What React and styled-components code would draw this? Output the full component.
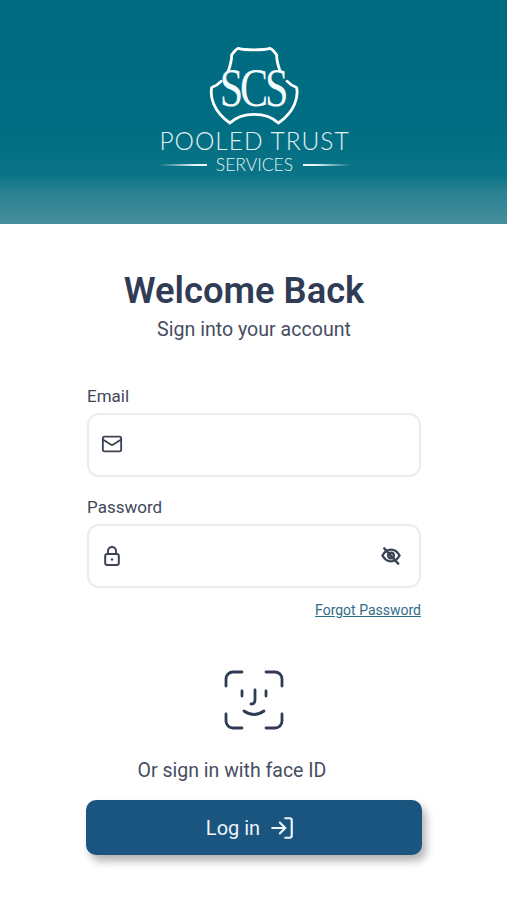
import React from 'react'
import styled, { createGlobalStyle } from 'styled-components'
import { Mail, LogIn } from 'lucide-react'

const GlobalStyle = createGlobalStyle`
  body {
    margin: 0;
    background: #fff;
    font-family: Roboto, "Liberation Sans", sans-serif;
  }
`

const Page = styled.div`
  width: 507px;
  height: 900px;
  overflow: hidden;
  background: #fff;
`

const Header = styled.header`
  height: 224px;
  padding: 43px 0 0 2px;
  box-sizing: border-box;
  display: flex;
  flex-direction: column;
  align-items: center;
  background: linear-gradient(180deg, #006b80 0%, #006d82 55%, #0a7387 78%, #2a8192 86%, #458e9d 100%);
`

const Shield = styled.div`
  position: relative;
  width: 92px;
  height: 83px;
  margin-left: -2px;
`

const Monogram = styled.span`
  position: absolute;
  left: 0;
  right: 0;
  top: 18px;
  text-align: center;
  font-family: "Liberation Serif", serif;
  font-size: 54px;
  line-height: 54px;
  letter-spacing: -4px;
  padding-right: 4px;
  color: #f4fbfb;
  transform: scaleX(0.78);
`

const Brand = styled.div`
  margin-top: 1px;
  font-family: Lato, sans-serif;
  font-weight: 300;
  font-size: 24.5px;
  line-height: 28px;
  letter-spacing: 1px;
  color: #e2f1f2;
  white-space: nowrap;
`

const SubBrandRow = styled.div`
  width: 192px;
  display: flex;
  align-items: center;
  justify-content: space-between;
`

const SubBrand = styled.span`
  font-family: Lato, sans-serif;
  font-weight: 300;
  font-size: 17.5px;
  line-height: 20px;
  color: #e2f1f2;
`

const Rule = styled.i`
  display: block;
  width: 48px;
  height: 1.5px;
  background: linear-gradient(${p => (p.$flip ? '270deg' : '90deg')}, rgba(255, 255, 255, 0) 0%, #eaf6f7 75%);
`

const Main = styled.main`
  padding: 46px 86px 0 87px;
  display: flex;
  flex-direction: column;
`

const Title = styled.h1`
  margin: 0;
  padding-right: 20px;
  text-align: center;
  font-size: 36.3px;
  line-height: 42px;
  font-weight: 600;
  color: #303c56;
`

const Subtitle = styled.p`
  margin: 5px 0 0;
  text-align: center;
  font-size: 19.6px;
  line-height: 26px;
  color: #464d60;
`

const Field = styled.div`
  margin-top: ${p => p.$top}px;
`

const Label = styled.label`
  display: block;
  font-size: 17px;
  line-height: 20px;
  margin-bottom: 7px;
  color: #41485a;
`

const InputBox = styled.div`
  height: 64px;
  box-sizing: border-box;
  border: 2px solid #ececec;
  border-radius: 12px;
  padding: 0 18px 0 12px;
  display: flex;
  align-items: center;
  justify-content: space-between;
  color: #3c4356;
`

const MailIcon = styled(Mail)`
  margin-bottom: 3px;
`

const LockSvg = styled.svg`
  margin-left: 3px;
`

const Forgot = styled.a`
  align-self: flex-end;
  margin-top: 14px;
  font-size: 14px;
  line-height: 17px;
  color: #2f6d86;
  text-decoration: underline;
`

const FaceBlock = styled.div`
  margin-top: 51px;
  align-self: center;
  line-height: 0;
  color: #303c56;
`

const FaceText = styled.p`
  margin: 29px 0 0;
  padding-right: 44px;
  text-align: center;
  font-size: 19.5px;
  line-height: 24px;
  color: #464d60;
`

const LoginButton = styled.button`
  margin: 17px -1px 0 -1px;
  padding: 0 7px 0 0;
  height: 55px;
  border: 0;
  border-radius: 10px;
  background: #1a5580;
  color: #eef4f8;
  font-family: inherit;
  font-size: 20px;
  display: flex;
  align-items: center;
  justify-content: center;
  gap: 9px;
  box-shadow: 4px 6px 8px rgba(0, 0, 0, 0.3);
`

const ShieldMark = () => (
  <svg width="92" height="83" viewBox="235 40 275 250" fill="none" stroke="#fff" strokeWidth="8.500" strokeLinecap="round" strokeLinejoin="round">
    <path d="M295 125 C302 105 306 90 305 76 C312 66 318 58 326 56 C345 62 400 62 420 56 C428 58 434 66 441 76 C440 90 444 105 451 125" />
    <path d="M274 155 C266 164 256 170 245 174 C240 200 248 245 300 281 C320 262 345 255 373 255 C401 255 426 262 446 281 C498 245 506 200 501 174 C490 170 480 164 472 155" />
  </svg>
)

const LockIcon = () => (
  <LockSvg width="16" height="20" viewBox="0 0 16 20" fill="none" stroke="currentColor" strokeWidth="2" strokeLinecap="round">
    <rect x="1.200" y="8" width="13.600" height="11" rx="2" />
    <path d="M4 8 V5 a4 4 0 0 1 8 0 V8" />
    <circle cx="8" cy="13.500" r="1.200" fill="currentColor" stroke="none" />
  </LockSvg>
)

const EyeOffIcon = () => (
  <svg width="20" height="18" viewBox="0 0 22 20" fill="none" stroke="currentColor" strokeWidth="2.600" strokeLinecap="round">
    <path d="M1.500 9.500 C4 5 7.500 3 11 3 C14.500 3 18 5 20.500 9.500 C18 14 14.500 16 11 16 C7.500 16 4 14 1.500 9.500 Z" />
    <circle cx="11" cy="9.500" r="3.200" />
    <path d="M3.500 1.500 L19 18.500" />
  </svg>
)

const FaceIcon = () => (
  <svg width="60" height="60" viewBox="0 0 60 60" fill="none" stroke="currentColor" strokeWidth="2.800" strokeLinecap="round" strokeLinejoin="round">
    <path d="M18 2 H9 a7 7 0 0 0 -7 7 V16" />
    <path d="M42 2 H51 a7 7 0 0 1 7 7 V16" />
    <path d="M2 44 V51 a7 7 0 0 0 7 7 H18" />
    <path d="M58 44 V51 a7 7 0 0 1 -7 7 H42" />
    <path d="M18 21 V26" />
    <path d="M42 21 V26" />
    <path d="M31 20 V30 Q31 34 27 34" />
    <path d="M20 41 Q30 48 40 41" />
  </svg>
)

export default function App() {
  return (
    <Page>
      <GlobalStyle />
      <Header>
        <Shield>
          <ShieldMark />
          <Monogram>SCS</Monogram>
        </Shield>
        <Brand>POOLED TRUST</Brand>
        <SubBrandRow>
          <Rule />
          <SubBrand>SERVICES</SubBrand>
          <Rule $flip />
        </SubBrandRow>
      </Header>
      <Main>
        <Title>Welcome Back</Title>
        <Subtitle>Sign into your account</Subtitle>
        <Field $top={43}>
          <Label>Email</Label>
          <InputBox>
            <MailIcon size={22} strokeWidth={2} />
          </InputBox>
        </Field>
        <Field $top={20}>
          <Label>Password</Label>
          <InputBox>
            <LockIcon />
            <EyeOffIcon />
          </InputBox>
        </Field>
        <Forgot>Forgot Password</Forgot>
        <FaceBlock>
          <FaceIcon />
        </FaceBlock>
        <FaceText>Or sign in with face ID</FaceText>
        <LoginButton>
          Log in
          <LogIn size={26} strokeWidth={2} />
        </LoginButton>
      </Main>
    </Page>
  )
}
